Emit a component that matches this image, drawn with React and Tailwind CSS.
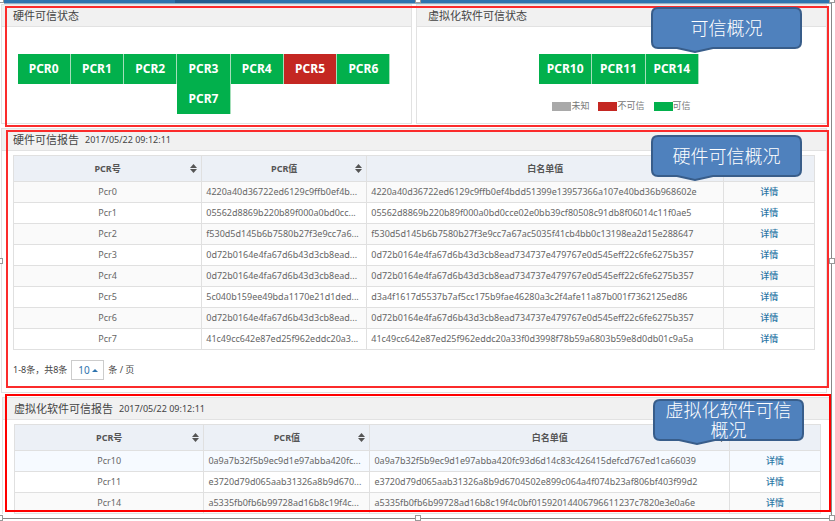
import React from "react";

// [register, measured value, visible characters of the value, whitelist value when it differs]
const hardware = [
  ["Pcr0", "4220a40d36722ed6129c9ffb0ef4bdd51399e13957366a107e40bd36b968602e", 29],
  ["Pcr1", "05562d8869b220b89f000a0bd0cce02e0bb39cf80508c91db8f06014c11f0ae5", 28],
  ["Pcr2", "f530d5d145b6b7580b27f3e9cc7a67ac5035f41cb4bb0c13198ea2d15e288647", 29],
  ["Pcr3", "0d72b0164e4fa67d6b43d3cb8ead734737e479767e0d545eff22c6fe6275b357", 28],
  ["Pcr4", "0d72b0164e4fa67d6b43d3cb8ead734737e479767e0d545eff22c6fe6275b357", 28],
  ["Pcr5", "5c040b159ee49bda1170e21d1ded", 28, "d3a4f1617d5537b7af5cc175b9fae46280a3c2f4afe11a87b001f7362125ed86"],
  ["Pcr6", "0d72b0164e4fa67d6b43d3cb8ead734737e479767e0d545eff22c6fe6275b357", 28],
  ["Pcr7", "41c49cc642e87ed25f962eddc20a33f0d3998f78b59a6803b59e8d0db01c9a5a", 29],
];

const virtual = [
  ["Pcr10", "0a9a7b32f5b9ec9d1e97abba420fc93d6d14c83c426415defcd767ed1ca66039", 29],
  ["Pcr11", "e3720d79d065aab31326a8b9d6704502e899c064a4f074b23af806bf403f99d2", 28],
  ["Pcr14", "a5335fb0fb6b99728ad16b8c19f4c0bf01592014406796611237c7820e3e0a6e", 29],
];

function SortIcon() {
  return (
    <svg className="h-[9px] w-[7px] justify-self-end" viewBox="0 0 7 9" aria-hidden="true">
      <path d="M3.5 0 7 4H0zM0 5h7L3.5 9z" fill="#555" />
    </svg>
  );
}

function PanelHeader({ title, time }) {
  return (
    <header className="flex h-[22px] items-center gap-1.5 border-b border-[#e2e2e2] bg-[#f1f1f1] pl-[11px] text-[#444]">
      <h2 className="text-[11px] leading-4">{title}</h2>
      {time && <time className="text-[9px] leading-4">{time}</time>}
    </header>
  );
}

function Tile({ name, bad, className = "" }) {
  return (
    <div
      className={`flex h-[30px] items-center justify-center border-r border-[#a5dfba] text-[12px] font-bold text-white ${
        bad ? "bg-[#c42722]" : "bg-[#02b04c]"
      } ${className}`}
    >
      {name}
    </div>
  );
}

function Legend({ color, label }) {
  return (
    <li className="flex items-center">
      <span className={`h-[9px] w-[19px] ${color}`} />
      {label}
    </li>
  );
}

function ReportTable({ rows, highlightFirst }) {
  return (
    <table className="w-full table-fixed border-collapse text-[9px] leading-3 text-[#666]">
      <colgroup>
        <col className="w-[23.5%]" />
        <col className="w-[20.6%]" />
        <col className="w-[44.6%]" />
        <col />
      </colgroup>
      <thead>
        <tr className="h-[26px] bg-[#ecf0f6] text-[#555]">
          {["PCR号", "PCR值", "白名单值"].map((name) => (
            <th key={name} className="border border-[#e0e0e0] px-1 font-bold">
              <span className="grid grid-cols-[1fr_auto_1fr] items-center">
                <span />
                <span className="whitespace-nowrap">{name}</span>
                <SortIcon />
              </span>
            </th>
          ))}
          <th className="border border-[#e0e0e0]" />
        </tr>
      </thead>
      <tbody>
        {rows.map(([name, value, shown, white], i) => (
          <tr
            key={name}
            className={`h-[21px] ${i % 2 ? "bg-white" : highlightFirst && i === 0 ? "bg-[#f6faff]" : "bg-[#fafafa]"}`}
          >
            <td className="border border-[#e0e0e0] text-center">{name}</td>
            <td className="border border-[#e0e0e0] pl-1 whitespace-nowrap">{value.slice(0, shown) + "..."}</td>
            <td className="border border-[#e0e0e0] pl-1 whitespace-nowrap">{white || value}</td>
            <td className="border border-[#e0e0e0] text-center">
              <a href="#detail" className="font-medium text-[#2a76a5]">详情</a>
            </td>
          </tr>
        ))}
      </tbody>
    </table>
  );
}

function Callout({ children, className }) {
  return (
    <div className={`absolute h-[46px] w-[151px] ${className}`}>
      <svg className="absolute inset-0 h-full w-full" viewBox="0 0 151 46" aria-hidden="true">
        <path
          d="M7 1H144Q150 1 150 7V35Q150 41 144 41H62L44 45 26 41H7Q1 41 1 35V7Q1 1 7 1Z"
          fill="#4f81bd"
          stroke="#385d8a"
          strokeWidth="2"
        />
      </svg>
      <p className="relative flex h-[42px] items-center justify-center px-2 text-center text-[18px] leading-5 font-light text-white">
        {children}
      </p>
    </div>
  );
}

function Handle({ className }) {
  return <span className={`absolute size-[6px] border border-[#999] bg-white ${className}`} />;
}

export default function App() {
  return (
    <div className="relative overflow-hidden bg-white pb-[2px] font-['Noto_Sans','Noto_Sans_CJK_SC',sans-serif]">
      <div className="mr-1 ml-1 h-[4px] border-b border-[#8fb0c9] bg-[#2f74ae] pl-[171px]">
        <div className="h-[3px] w-[75px] bg-[#235d8f]" />
      </div>

      <div className="mr-2 ml-px grid grid-cols-2 gap-1">
        <section className="h-[120px] border border-[#e2e2e2]">
          <PanelHeader title="硬件可信状态" />
          <div className="pt-[27px] pr-[5px]">
            <div className="mx-auto grid w-[373px] grid-cols-7">
              {[0, 1, 2, 3, 4, 5, 6].map((n) => (
                <Tile key={n} name={"PCR" + n} bad={n === 5} />
              ))}
              <Tile name="PCR7" className="col-start-4" />
            </div>
          </div>
        </section>
        <section className="h-[120px] border border-[#e2e2e2]">
          <PanelHeader title="虚拟化软件可信状态" />
          <div className="pt-[27px] pr-[5px]">
            <div className="mx-auto grid w-[160px] grid-cols-3">
              <Tile name="PCR10" />
              <Tile name="PCR11" />
              <Tile name="PCR14" />
            </div>
          </div>
          <ul className="mt-4 flex justify-center gap-[9px] text-[9px] leading-3 text-[#777]">
            <Legend color="bg-[#a9a9a9]" label="未知" />
            <Legend color="bg-[#c42722]" label="不可信" />
            <Legend color="bg-[#02b04c]" label="可信" />
          </ul>
        </section>
      </div>

      <section className="mt-1 mr-2 ml-px border border-[#e2e2e2]">
        <PanelHeader title="硬件可信报告" time="2017/05/22 09:12:11" />
        <div className="px-[11px] pt-1 pb-0.5">
          <ReportTable rows={hardware} />
          <div className="flex h-10 items-center gap-1 text-[9px] text-[#444]">
            <label htmlFor="page-size">1-8条，共8条</label>
            <div className="relative">
              <select
                id="page-size"
                defaultValue="10"
                className="block h-5 w-[33px] appearance-none border border-[#ccc] bg-white pl-1.5 text-[10px] text-[#2f74ae]"
              >
                <option>10</option>
                <option>20</option>
              </select>
              <svg className="pointer-events-none absolute top-[9px] right-[6px] h-[3px] w-[6px]" viewBox="0 0 6 3" aria-hidden="true">
                <path d="M3 0 6 3H0z" fill="#2f74ae" />
              </svg>
            </div>
            <span>条 / 页</span>
          </div>
        </div>
      </section>

      <section className="mt-1 mr-1 ml-0.5 border-x border-t border-[#e2e2e2]">
        <PanelHeader title="虚拟化软件可信报告" time="2017/05/22 09:12:11" />
        <div className="pt-1 pr-[9px] pl-[11px]">
          <ReportTable rows={virtual} highlightFirst />
        </div>
      </section>
      <div className="mt-1 mr-[3px] border-b border-[#888]" />

      <div className="absolute top-[6px] right-[6px] left-[5px] h-[121px] border-2 border-[#fb2b2b]" />
      <div className="absolute top-[130px] right-[6px] left-[6px] h-[258px] border-2 border-[#fb2b2b]" />
      <div className="absolute top-[394px] right-[4px] left-[5px] h-[118px] border-2 border-[#ff0000]" />
      <div className="absolute top-0 right-[3px] bottom-[2px] border-r border-[#888]" />

      <Callout className="top-[7px] right-[33px]">可信概况</Callout>
      <Callout className="top-[135px] right-[33px]">硬件可信概况</Callout>
      <Callout className="top-[399px] right-[31px]">虚拟化软件可信概况</Callout>

      <Handle className="-top-[3px] left-[-2px]" />
      <Handle className="-top-[3px] left-1/2 -translate-x-1/2" />
      <Handle className="-top-[3px] right-0" />
      <Handle className="top-1/2 left-[-3px] -translate-y-1/2" />
      <Handle className="top-1/2 right-0 -translate-y-1/2" />
      <Handle className="bottom-0 left-[-3px]" />
      <Handle className="bottom-0 left-1/2 -translate-x-1/2" />
      <Handle className="right-0 bottom-0" />
    </div>
  );
}
